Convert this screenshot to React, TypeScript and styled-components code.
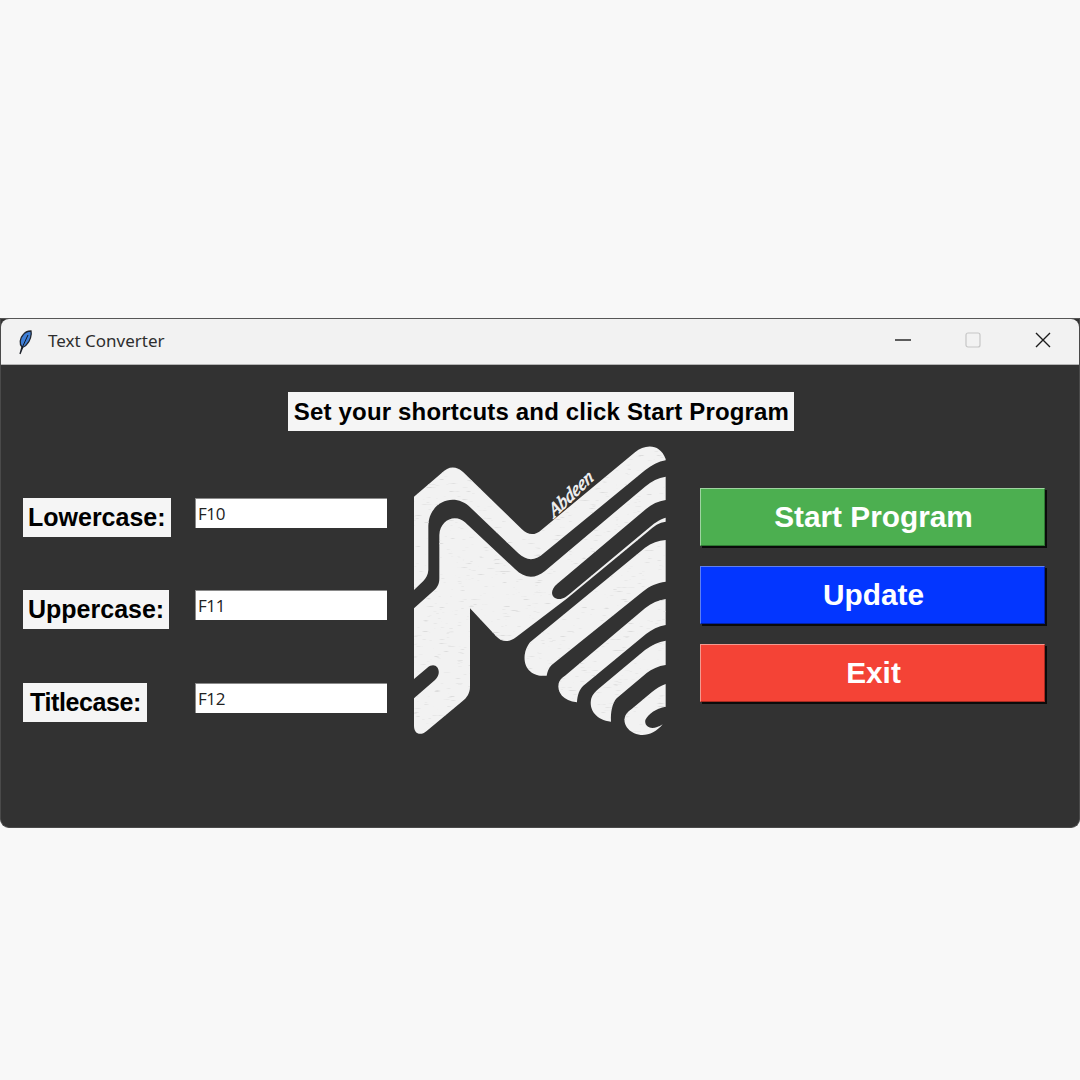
import styled, { createGlobalStyle } from "styled-components"

const GlobalStyle = createGlobalStyle`
  html, body {
    margin:0;
    padding:0;
    background:#f8f8f8;
  }
`

const Page = styled.div`
  width:1080px;
  height:1080px;
  padding-top:318px;
  box-sizing:border-box;
  overflow:hidden;
`

const Window = styled.div`
  height:510px;
  box-sizing:border-box;
  background:#323232;
  border-top:1px solid #565656;
  border-bottom:1px solid #4a4a4a;
  border-left:1px solid #4a4a4a;
  border-right:1px solid #4a4a4a;
  border-radius:0 0 9px 9px;
  display:flex;
  flex-direction:column;
`

const TitleBar = styled.div`
  height:46px;
  flex:none;
  box-sizing:border-box;
  background:#f2f2f2;
  border-bottom:1px solid #b5b5b5;
  border-radius:8px 8px 0 0;
  display:flex;
  align-items:center;
  padding-left:16px;
`

const AppTitle = styled.span`
  margin-left:15px;
  padding-bottom:2px;
  font-family:"Noto Sans", sans-serif;
  font-size:17px;
  color:#2e2e2e;
`

const WindowControls = styled.div`
  margin-left:auto;
  padding-right:1px;
  display:flex;
  height:100%;
`

const ControlButton = styled.div`
  width:70px;
  display:flex;
  align-items:center;
  justify-content:center;
  padding-bottom:3px;
  box-sizing:border-box;
`

const Body = styled.div`
  flex:1;
  display:flex;
  flex-direction:column;
  align-items:center;
  padding-top:27px;
`

const Heading = styled.div`
  height:39px;
  margin-left:2px;
  padding:0 5px 0 6px;
  display:flex;
  align-items:center;
  background:#f5f5f5;
  color:#000;
  font-family:"Liberation Sans", Arial, sans-serif;
  font-weight:bold;
  font-size:24px;
  letter-spacing:0.17px;
  white-space:nowrap;
`

const Main = styled.div`
  align-self:stretch;
  margin-top:4px;
  display:grid;
  grid-template-columns:399px 280px 1fr;
`

const Form = styled.div`
  padding:63px 0 0 22px;
  display:grid;
  grid-template-columns:172px 192px;
  grid-template-rows:92px 93px 39px;
`

const Label = styled.div<{ $tight?: boolean }>`
  justify-self:start;
  height:39px;
  padding:${({ $tight }) => ($tight ? "0 6px 0 7px" : "0 5px")};
  display:flex;
  align-items:center;
  background:#f5f5f5;
  color:#000;
  font-family:"Liberation Sans", Arial, sans-serif;
  font-weight:bold;
  font-size:25px;
  ${({ $tight }) => $tight && `letter-spacing:-0.4px;`}
`

const ShortcutInput = styled.input`
  width:192px;
  height:30px;
  box-sizing:border-box;
  margin:0;
  padding:0 3px 1px 2px;
  border:none;
  border-top:1px solid #8a8a8a;
  border-left:1px solid #8a8a8a;
  outline:none;
  background:#fff;
  color:#222;
  font-family:"Open Sans", sans-serif;
  font-size:17px;
  letter-spacing:-0.4px;
`

const Logo = styled.svg`
  display:block;
  width:280px;
  height:310px;
`

const LogoSignature = styled.text`
  font-family:"Liberation Serif", serif;
  font-style:italic;
  font-size:56px;
  fill:#f2f2f2;
  stroke:#f2f2f2;
  stroke-width:2px;
`

const Buttons = styled.div`
  padding:53px 0 0 20px;
  display:flex;
  flex-direction:column;
  gap:20px;
`

const COLORS = {
  green: { bg: "#4caf50", light: "#9fd3a1", dark: "#2f7a33" },
  blue: { bg: "#0336ff", light: "#5f80f0", dark: "#0222a8" },
  red: { bg: "#f44336", light: "#f39a90", dark: "#a82a20" },
}

const ActionButton = styled.div<{ $color: keyof typeof COLORS }>`
  width:345px;
  height:58px;
  box-sizing:border-box;
  padding-left:2px;
  display:flex;
  align-items:center;
  justify-content:center;
  background:${({ $color }) => COLORS[$color].bg};
  border-top:1px solid ${({ $color }) => COLORS[$color].light};
  border-left:1px solid ${({ $color }) => COLORS[$color].light};
  border-bottom:1px solid ${({ $color }) => COLORS[$color].dark};
  border-right:1px solid ${({ $color }) => COLORS[$color].dark};
  box-shadow:2px 2px 0 #0b0b0b;
  color:#fff;
  font-family:"Liberation Sans", Arial, sans-serif;
  font-weight:bold;
  font-size:29.8px;
`

const Feather = () => (
  <svg width="16" height="26" viewBox="0 0 16 26">
    <path d="M3 25 L5 18 C2 15 3 9 6 6 C8 3 11 2 14 2 C15 6 13 12 10 15 C9 17 7 18 5.6 18.5 Z" fill="#3f7fd6" stroke="#20242c" strokeWidth="1.3" />
    <path d="M4.5 20 L11 6" stroke="#12161e" strokeWidth="1" fill="none" />
  </svg>
)

const WHITE = "#f2f2f2"

const LogoMark = () => (
  <Logo viewBox="0 0 840 930">
    <defs>
      <filter id="paper" x="0" y="0" width="100%" height="100%">
        <feGaussianBlur in="SourceGraphic" stdDeviation="1.6" result="soft" />
        <feTurbulence type="fractalNoise" baseFrequency="0.03 0.25" numOctaves="2" seed="4" result="noise" />
        <feColorMatrix in="noise" type="matrix" values="0 0 0 0 0.72  0 0 0 0 0.72  0 0 0 0 0.72  0 0 0 7 -4.7" result="specks" />
        <feComposite in="specks" in2="soft" operator="in" result="marks" />
        <feMerge>
          <feMergeNode in="soft" />
          <feMergeNode in="marks" />
        </feMerge>
      </filter>
    </defs>
    <g fill={WHITE} filter="url(#paper)">
      <path d="M42 185 L125 114 C145 92 170 92 190 112 L365 282 C385 302 405 302 425 284 L705 52 C735 27 780 25 797 72 L797 76 C775 80 755 90 735 106 L435 352 C405 380 380 378 355 355 L212 218 C175 182 125 190 100 225 C88 242 85 258 85 280 L85 405 C84 420 78 430 70 438 L42 465 Z" />
      <path d="M42 520 L100 468 C112 458 118 448 118 430 L118 300 C120 255 165 235 195 262 L345 402 C375 432 405 432 435 408 L735 155 C755 138 775 128 797 125 L797 195 C775 198 755 208 738 222 L472 446 C445 468 455 495 482 492 C492 490 498 486 505 480 L740 284 C760 267 778 252 797 248 L797 260 C778 262 762 273 745 289 L500 491 L350 605 C325 625 305 620 290 605 L210 520 L210 755 C210 775 200 788 188 798 L80 888 C60 905 42 895 42 872 L42 790 L105 735 C130 712 110 675 82 698 L42 732 Z" />
      <path d="M390 622 L735 338 C755 324 775 317 797 315 L797 440 C770 444 750 452 728 470 L455 690 C445 700 442 712 440 722 C395 726 370 700 374 660 C376 645 382 632 390 622 Z" />
      <path d="M495 722 L735 520 C755 504 775 495 797 492 L797 570 C775 574 755 584 738 597 L550 752 C538 764 532 780 531 802 C490 798 470 772 476 745 C479 735 486 728 495 722 Z" />
      <path d="M595 762 L735 645 C755 630 775 620 797 617 L797 690 C775 693 755 702 740 714 L650 790 C638 802 631 830 633 860 C590 856 565 825 574 790 C578 778 586 770 595 762 Z" />
      <path d="M695 822 L755 772 C770 760 782 752 797 747 L797 815 C770 820 745 835 736 855 C732 875 755 890 788 868 C770 890 745 902 722 900 C685 895 665 865 677 840 C682 832 688 827 695 822 Z" />
    </g>
    <LogoSignature x="0" y="0" transform="translate(462 250) rotate(-44) skewX(-14)">Abdeen</LogoSignature>
  </Logo>
)

export default function App() {
  return (
    <Page>
      <GlobalStyle />
      <Window>
        <TitleBar>
          <Feather />
          <AppTitle>Text Converter</AppTitle>
          <WindowControls>
            <ControlButton>
              <svg width="18" height="18" viewBox="0 0 18 18"><path d="M1 9 H17" stroke="#1c1c1c" strokeWidth="1.4" /></svg>
            </ControlButton>
            <ControlButton>
              <svg width="18" height="18" viewBox="0 0 18 18"><rect x="2" y="2" width="14" height="14" rx="2" fill="none" stroke="#c6c6c6" strokeWidth="1.2" /></svg>
            </ControlButton>
            <ControlButton>
              <svg width="18" height="18" viewBox="0 0 18 18"><path d="M2 2 L16 16 M16 2 L2 16" stroke="#1c1c1c" strokeWidth="1.4" /></svg>
            </ControlButton>
          </WindowControls>
        </TitleBar>
        <Body>
          <Heading>Set your shortcuts and click Start Program</Heading>
          <Main>
            <Form>
              <Label>Lowercase:</Label>
              <ShortcutInput defaultValue="F10" />
              <Label>Uppercase:</Label>
              <ShortcutInput defaultValue="F11" />
              <Label $tight>Titlecase:</Label>
              <ShortcutInput defaultValue="F12" />
            </Form>
            <LogoMark />
            <Buttons>
              <ActionButton $color="green">Start Program</ActionButton>
              <ActionButton $color="blue">Update</ActionButton>
              <ActionButton $color="red">Exit</ActionButton>
            </Buttons>
          </Main>
        </Body>
      </Window>
    </Page>
  )
}
